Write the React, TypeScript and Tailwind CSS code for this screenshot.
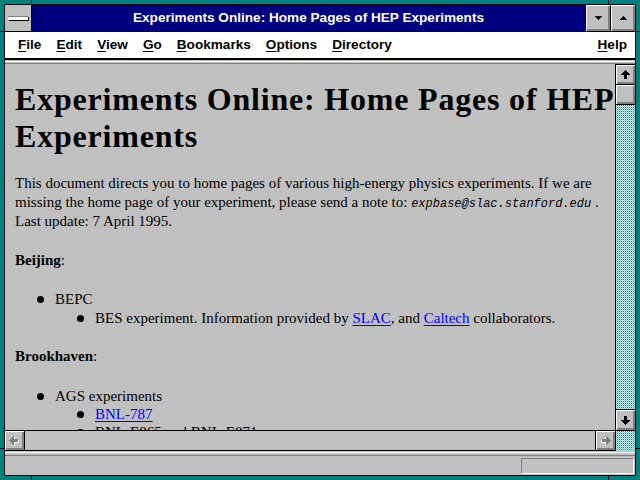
import type { ReactNode } from 'react';

// dither used by the scrollbar track
const checker =
  'bg-[conic-gradient(#008080_25%,#ffffff_0_50%,#80c0c0_0_75%,#ffffff_0)] bg-[length:2px_2px]';

const bevel = 'shadow-[inset_1px_1px_0_#ffffff,inset_-1px_-1px_0_#808080,inset_-2px_-2px_0_#808080]';

const menus = ['File', 'Edit', 'View', 'Go', 'Bookmarks', 'Options', 'Directory'];

function MenuLabel({ label }: { label: string }) {
  return (
    <span>
      <u className="underline-offset-2">{label[0]}</u>
      {label.slice(1)}
    </span>
  );
}

function ArrowUp({ down = false }: { down?: boolean }) {
  return (
    <svg width="9" height="9" viewBox="0 0 9 9" shapeRendering="crispEdges" className={down ? 'rotate-180' : ''}>
      <polygon points="4.5,0 9,5 6,5 6,9 3,9 3,5 0,5" fill="#000" />
    </svg>
  );
}

function GrayArrow({ right = false }: { right?: boolean }) {
  return (
    <svg width="11" height="10" viewBox="0 0 11 10" shapeRendering="crispEdges" className={right ? '-scale-x-100' : ''}>
      <polygon points="1,5.5 6,1 6,4 10,4 10,7 6,7 6,10" fill="#ffffff" />
      <polygon points="0,4.5 5,0 5,3 9,3 9,6 5,6 5,9" fill="#808080" />
    </svg>
  );
}

function Item({ level, children }: { level: 1 | 2; children: ReactNode }) {
  return (
    <div className={`flex items-center whitespace-nowrap ${level === 1 ? 'pl-[22px]' : 'pl-[62px]'}`}>
      <span className="w-[7px] h-[7px] rounded-full bg-black mr-[11px] shrink-0" />
      <span>{children}</span>
    </div>
  );
}

function Link({ children }: { children: ReactNode }) {
  return <a className="text-[#0000ff] underline underline-offset-[2px]">{children}</a>;
}

export default function App() {
  return (
    <div className="relative w-[640px] h-[480px] bg-[#008080] p-[4px] overflow-hidden">
      {/* frame corner notches */}
      <div className="absolute left-[31px] top-0 w-px h-[4px] bg-black" />
      <div className="absolute left-[608px] top-0 w-px h-[4px] bg-black" />
      <div className="absolute left-[31px] bottom-0 w-px h-[4px] bg-black" />
      <div className="absolute left-[608px] bottom-0 w-px h-[4px] bg-black" />
      <div className="absolute left-0 top-[31px] w-[4px] h-px bg-black" />
      <div className="absolute right-0 top-[31px] w-[4px] h-px bg-black" />
      <div className="absolute left-0 top-[448px] w-[4px] h-px bg-black" />
      <div className="absolute right-0 top-[448px] w-[4px] h-px bg-black" />

      <div className="h-full flex flex-col border border-black bg-[#c0c0c0]">
        {/* Title bar */}
        <div className="h-[27px] shrink-0 flex border-b border-black">
          <div className="w-[27px] border-r border-black bg-[#c0c0c0] flex items-center justify-center">
            <div className="w-[20px] h-[4px] bg-white border-t border-[#808080] shadow-[1px_1px_0_#000]" />
          </div>
          <div className="flex-1 bg-[#000080] text-white font-['Liberation_Sans'] font-bold text-[13.6px] flex items-center justify-center">
            Experiments Online: Home Pages of HEP Experiments
          </div>
          <div className={`w-[25px] border-l border-black bg-[#c0c0c0] flex items-center justify-center ${bevel}`}>
            <svg width="7" height="4" viewBox="0 0 7 4" shapeRendering="crispEdges">
              <polygon points="0,0 7,0 3.5,4" fill="#000" />
            </svg>
          </div>
          <div className={`w-[25px] border-l border-black bg-[#c0c0c0] flex items-center justify-center ${bevel}`}>
            <svg width="7" height="4" viewBox="0 0 7 4" shapeRendering="crispEdges">
              <polygon points="3.5,0 7,4 0,4" fill="#000" />
            </svg>
          </div>
        </div>

        {/* Menu bar */}
        <div className="h-[28px] shrink-0 bg-white border-b-2 border-black flex items-center pl-[13px] pr-[8px] gap-[15px] font-['Liberation_Sans'] font-bold text-[13.6px] text-black">
          {menus.map((m) => (
            <MenuLabel key={m} label={m} />
          ))}
          <span className="ml-auto">
            <MenuLabel label="Help" />
          </span>
        </div>

        {/* separator */}
        <div className="h-[4px] shrink-0 flex flex-col">
          <div className="h-px bg-[#c0c0c0]" />
          <div className="h-px bg-white" />
          <div className="h-px bg-[#c0c0c0]" />
          <div className="h-px bg-[#808080]" />
        </div>

        {/* Body */}
        <div className="flex-1 min-h-0 flex">
          <div className="flex-1 min-w-0 flex flex-col">
            <div className="flex-1 min-h-0 overflow-hidden pl-[10px] pt-[17px] font-['Liberation_Serif'] text-[15px] leading-[19px] text-black">
              <h1 className="text-[32px] leading-[37px] font-bold tracking-[0.8px] whitespace-nowrap">
                Experiments Online: Home Pages of HEP
                <br />
                Experiments
              </h1>
              <p className="mt-[19px] whitespace-nowrap">
                This document directs you to home pages of various high-energy physics experiments. If we are
                <br />
                missing the home page of your experiment, please send a note to:{' '}
                <i className="font-['Liberation_Mono'] text-[12px] leading-none">expbase@slac.stanford.edu</i> .
                <br />
                Last update: 7 April 1995.
              </p>
              <p className="mt-[20px]">
                <b>Beijing</b>:
              </p>
              <div className="mt-[20px]">
                <Item level={1}>BEPC</Item>
                <Item level={2}>
                  BES experiment. Information provided by <Link>SLAC</Link>, and <Link>Caltech</Link> collaborators.
                </Item>
              </div>
              <p className="mt-[19px]">
                <b>Brookhaven</b>:
              </p>
              <div className="mt-[21px] leading-[18px]">
                <Item level={1}>AGS experiments</Item>
                <Item level={2}>
                  <Link>BNL-787</Link>
                </Item>
                <Item level={2}>BNL-E865 and BNL-E871</Item>
              </div>
            </div>

            {/* Horizontal scrollbar */}
            <div className="h-[21px] shrink-0 border-t border-b border-black flex">
              <div className={`w-[20px] border-r border-black flex items-center justify-center ${bevel}`}>
                <GrayArrow />
              </div>
              <div className="flex-1" />
              <div className={`w-[20px] border-l border-black flex items-center justify-center ${bevel}`}>
                <GrayArrow right />
              </div>
            </div>
          </div>

          {/* Vertical scrollbar */}
          <div className="w-[20px] shrink-0 border-l border-black flex flex-col">
            <div className="h-px bg-black" />
            <div className={`h-[20px] border-b border-black flex items-center justify-center ${bevel}`}>
              <ArrowUp />
            </div>
            <div className={`h-[20px] border-b border-black ${bevel}`} />
            <div className={`flex-1 ${checker}`} />
            <div className={`h-[22px] border-t border-b border-black flex items-center justify-center ${bevel}`}>
              <ArrowUp down />
            </div>
            <div className={`h-[20px] ${checker}`} />
          </div>
        </div>

        {/* separator */}
        <div className="h-[5px] shrink-0 flex flex-col">
          <div className="h-px bg-[#c0c0c0]" />
          <div className="h-px bg-white" />
          <div className="h-[2px] bg-[#c0c0c0]" />
          <div className="h-px bg-[#808080]" />
        </div>

        {/* Status bar */}
        <div className="h-[19px] shrink-0 flex items-start pt-[2px] pr-[1px]">
          <div className="ml-auto w-[113px] h-[16px] border border-[#808080] border-b-white border-r-white" />
        </div>
      </div>
    </div>
  );
}
